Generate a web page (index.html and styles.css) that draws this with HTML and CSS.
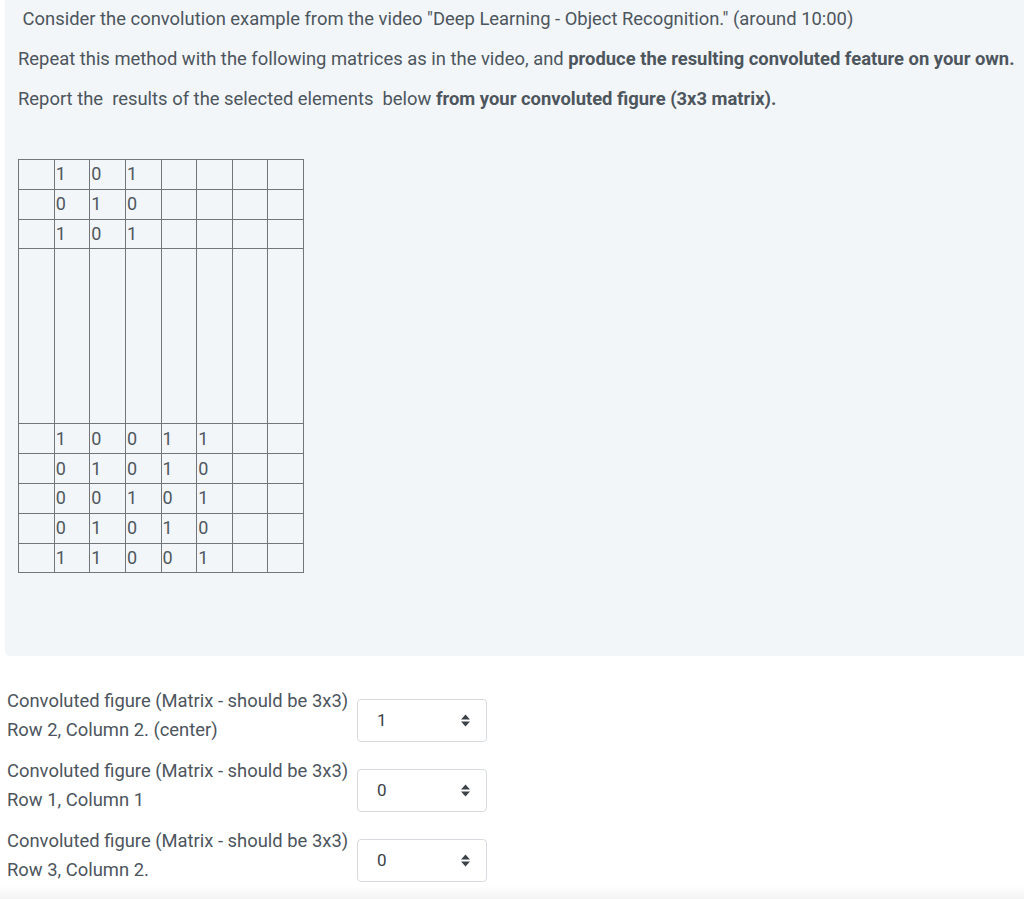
FILE: index.html
```html
<!DOCTYPE html>
<html>
<head>
<meta charset="utf-8">
<link rel="stylesheet" href="styles.css">
</head>
<body>
<div class="panel">
  <p class="line">&nbsp;Consider the convolution example from the video "Deep Learning - Object Recognition." (around 10:00)</p>
  <p class="line">Repeat this method with the following matrices as in the video, and <b>produce the resulting convoluted feature on your own.</b></p>
  <p class="line">Report the&nbsp; results of the selected elements&nbsp; below <b>from your convoluted figure (3x3 matrix).</b></p>
  <table class="grid">
    <tr><td></td><td>1</td><td>0</td><td>1</td><td></td><td></td><td></td><td></td></tr>
    <tr><td></td><td>0</td><td>1</td><td>0</td><td></td><td></td><td></td><td></td></tr>
    <tr><td></td><td>1</td><td>0</td><td>1</td><td></td><td></td><td></td><td></td></tr>
    <tr class="tall"><td></td><td></td><td></td><td></td><td></td><td></td><td></td><td></td></tr>
    <tr><td></td><td>1</td><td>0</td><td>0</td><td>1</td><td>1</td><td></td><td></td></tr>
    <tr><td></td><td>0</td><td>1</td><td>0</td><td>1</td><td>0</td><td></td><td></td></tr>
    <tr><td></td><td>0</td><td>0</td><td>1</td><td>0</td><td>1</td><td></td><td></td></tr>
    <tr><td></td><td>0</td><td>1</td><td>0</td><td>1</td><td>0</td><td></td><td></td></tr>
    <tr><td></td><td>1</td><td>1</td><td>0</td><td>0</td><td>1</td><td></td><td></td></tr>
  </table>
</div>

<div class="answers">
  <div class="answer">
    <div class="label">Convoluted figure (Matrix - should be 3x3)<br>Row 2, Column 2. (center)</div>
    <div class="select">
      <span class="value">1</span>
      <svg class="sort" width="9" height="13" viewBox="0 0 9 13"><path d="M0 5.5 L4.5 0.5 L9 5.5 Z M0 7.5 L9 7.5 L4.5 12.5 Z" fill="#3b4248"/></svg>
    </div>
  </div>
  <div class="answer">
    <div class="label">Convoluted figure (Matrix - should be 3x3)<br>Row 1, Column 1</div>
    <div class="select">
      <span class="value">0</span>
      <svg class="sort" width="9" height="13" viewBox="0 0 9 13"><path d="M0 5.5 L4.5 0.5 L9 5.5 Z M0 7.5 L9 7.5 L4.5 12.5 Z" fill="#3b4248"/></svg>
    </div>
  </div>
  <div class="answer">
    <div class="label">Convoluted figure (Matrix - should be 3x3)<br>Row 3, Column 2.</div>
    <div class="select">
      <span class="value">0</span>
      <svg class="sort" width="9" height="13" viewBox="0 0 9 13"><path d="M0 5.5 L4.5 0.5 L9 5.5 Z M0 7.5 L9 7.5 L4.5 12.5 Z" fill="#3b4248"/></svg>
    </div>
  </div>
</div>
<div class="footer-shade"></div>
</body>
</html>
```

FILE: styles.css
```css
html, body {
  margin: 0;
  padding: 0;
  background: #ffffff;
}
body {
  font-family: Roboto, "Liberation Sans", sans-serif;
  font-size: 18.4px;
  color: #4d555d;
  height: 899px;
  overflow: hidden;
  position: relative;
}
.panel {
  margin-left: 5px;
  background: #f2f6f9;
  border-bottom-left-radius: 5px;
  padding: 7px 0 83px 13px;
}
.line {
  margin: 0 0 16px 0;
  line-height: 24px;
}
.line b {
  font-weight: 700;
}
.grid {
  margin-top: 48px;
  border-collapse: collapse;
  table-layout: fixed;
  width: 286px;
  border: 1px solid #6c7278;
}
.grid td {
  height: 28.8px;
  padding: 0 0 0 1px;
  border: 1px solid #70767c;
  vertical-align: middle;
  font-size: 18px;
  line-height: 20px;
  color: #50585f;
}
.grid td:nth-child(2),
.grid td:nth-child(6),
.grid td:nth-child(8) {
  border-left-color: #a3a8ad;
}
.grid tr.tall td {
  height: 174px;
}
.answers {
  padding: 32px 0 0 7px;
  display: flex;
  flex-direction: column;
  gap: 14px;
}
.answer {
  display: flex;
  align-items: flex-start;
}
.label {
  width: 350px;
  line-height: 29px;
  margin-top: -2px;
}
.select {
  box-sizing: border-box;
  width: 130px;
  height: 43px;
  margin-top: 11px;
  border: 1px solid #d7dbdf;
  border-radius: 4px;
  background: #ffffff;
  display: flex;
  align-items: center;
  justify-content: space-between;
  padding: 0 16px 0 19px;
  color: #3b4248;
  font-size: 17px;
}
.select .value {
  margin-top: -2px;
}
.footer-shade {
  position: absolute;
  left: 0;
  right: 0;
  bottom: 0;
  height: 13px;
  background: linear-gradient(#ffffff, #f3f3f3);
}
```
